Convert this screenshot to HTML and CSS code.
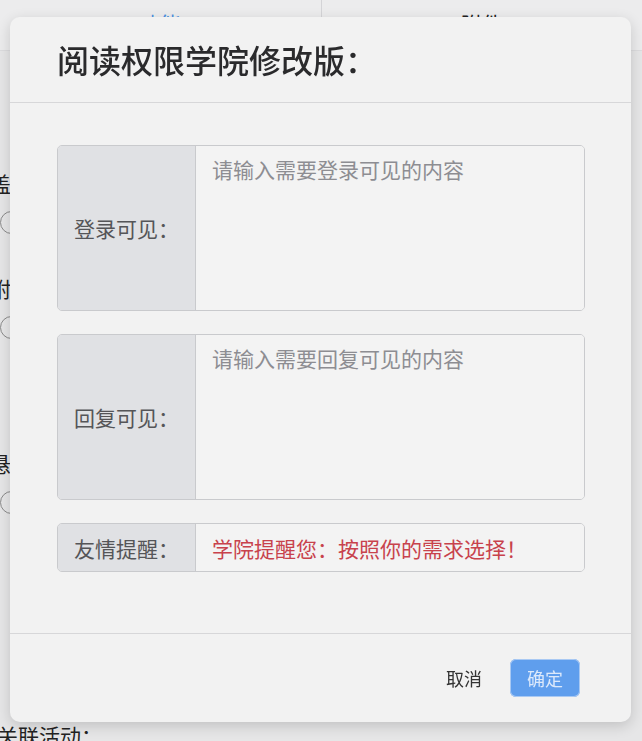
FILE: index.html
```html
<!DOCTYPE html>
<html lang="zh-CN">
<head>
<meta charset="utf-8">
<title>阅读权限</title>
<link rel="stylesheet" href="styles.css">
</head>
<body>
<div class="page">
  <div class="tabs">
    <div class="tab active">功能</div>
    <div class="tab">附件</div>
  </div>
  <div class="form">
    <div class="field f1">
      <div class="field-label">盖楼</div>
      <span class="radio"></span>
    </div>
    <div class="field f2">
      <div class="field-label">附件</div>
      <span class="radio"></span>
    </div>
    <div class="field f3">
      <div class="field-label">悬赏</div>
      <span class="radio"></span>
    </div>
    <div class="field f4">
      <div class="field-label plain">关联活动：</div>
    </div>
  </div>
</div>

<div class="modal">
  <div class="modal-header">
    <h2 class="modal-title">阅读权限学院修改版：</h2>
  </div>
  <div class="modal-body">
    <div class="group tall">
      <div class="group-label">登录可见：</div>
      <textarea class="group-input" placeholder="请输入需要登录可见的内容"></textarea>
    </div>
    <div class="group tall">
      <div class="group-label">回复可见：</div>
      <textarea class="group-input" placeholder="请输入需要回复可见的内容"></textarea>
    </div>
    <div class="group short">
      <div class="group-label">友情提醒：</div>
      <div class="group-value">学院提醒您：按照你的需求选择！</div>
    </div>
  </div>
  <div class="modal-footer">
    <button class="btn btn-cancel">取消</button>
    <button class="btn btn-ok">确定</button>
  </div>
</div>
</body>
</html>
```

FILE: styles.css
```css
* { box-sizing: border-box; }
html, body { margin: 0; padding: 0; }
body {
  width: 642px;
  height: 741px;
  overflow: hidden;
  background: #e6e6e7;
  font-family: "Noto Sans CJK SC", "Noto Sans", sans-serif;
}

/* background page */
.tabs {
  display: flex;
  height: 51px;
  background: #ececed;
  border-bottom: 1px solid #dcdcde;
}
.tab {
  flex: 1;
  text-align: center;
  font-size: 21px;
  line-height: 46px;
  color: #222;
}
.tab + .tab { border-left: 1px solid #d4d4d7; }
.tab.active { color: #4a90e2; }

.form {
  margin-left: -10px;
  font-size: 21px;
  color: #222;
}
.field-label { line-height: 24px; }
.radio {
  display: block;
  width: 23px;
  height: 23px;
  margin: 16px 0 0 10px;
  border: 1.5px solid #8a8a8a;
  border-radius: 50%;
}
.f1 { margin-top: 120px; }
.f2 { margin-top: 42px; }
.f3 { margin-top: 112px; }
.f4 { margin-top: 209px; }
.f4 .plain { margin-left: 7px; }

/* modal */
.modal {
  position: fixed;
  left: 10px;
  top: 17px;
  width: 621px;
  height: 705px;
  background: #f2f2f2;
  border-radius: 10px;
  box-shadow: 0 4px 14px rgba(0, 0, 0, 0.16);
  display: flex;
  flex-direction: column;
}
.modal-header {
  height: 86px;
  display: flex;
  align-items: center;
  padding-left: 47px;
  padding-bottom: 2px;
  border-bottom: 1px solid #d7d7d9;
}
.modal-title {
  margin: 0;
  font-size: 32px;
  font-weight: 500;
  color: #2a2a2c;
  line-height: 1;
}
.modal-body {
  flex: 1;
  padding: 42px 46px 0 47px;
  display: flex;
  flex-direction: column;
  gap: 23px;
}
.group {
  display: flex;
  border: 1px solid #c9cacd;
  border-radius: 5px;
  overflow: hidden;
}
.group.tall { height: 166px; }
.group.short { height: 49px; }
.group-label {
  width: 138px;
  flex: none;
  display: flex;
  align-items: center;
  padding-left: 16px;
  background: #e0e1e4;
  border-right: 1px solid #c9cacd;
  font-size: 21px;
  color: #555558;
}
.group-input {
  flex: 1;
  margin: 0;
  border: none;
  outline: none;
  resize: none;
  background: #f3f3f3;
  padding: 9px 16px;
  font-family: inherit;
  font-size: 21px;
  line-height: 29px;
  color: #333;
}
.group-input::placeholder { color: #8d8d92; }
.group-value {
  flex: 1;
  display: flex;
  align-items: center;
  padding-left: 16px;
  background: #f3f3f3;
  font-size: 21px;
  color: #c8424c;
}
.modal-footer {
  height: 89px;
  border-top: 1px solid #d7d7d9;
  display: flex;
  align-items: center;
  justify-content: flex-end;
  gap: 11px;
  padding-right: 51px;
}
.btn {
  height: 38px;
  padding: 0 17px;
  border: none;
  border-radius: 6px;
  font-family: inherit;
  font-size: 18px;
  line-height: 38px;
}
.btn-cancel { background: transparent; color: #333; }
.btn-ok {
  background: #5f9eed;
  color: #dce9fb;
  box-shadow: 0 0 0 1px #a9c9f3 inset;
}
```
